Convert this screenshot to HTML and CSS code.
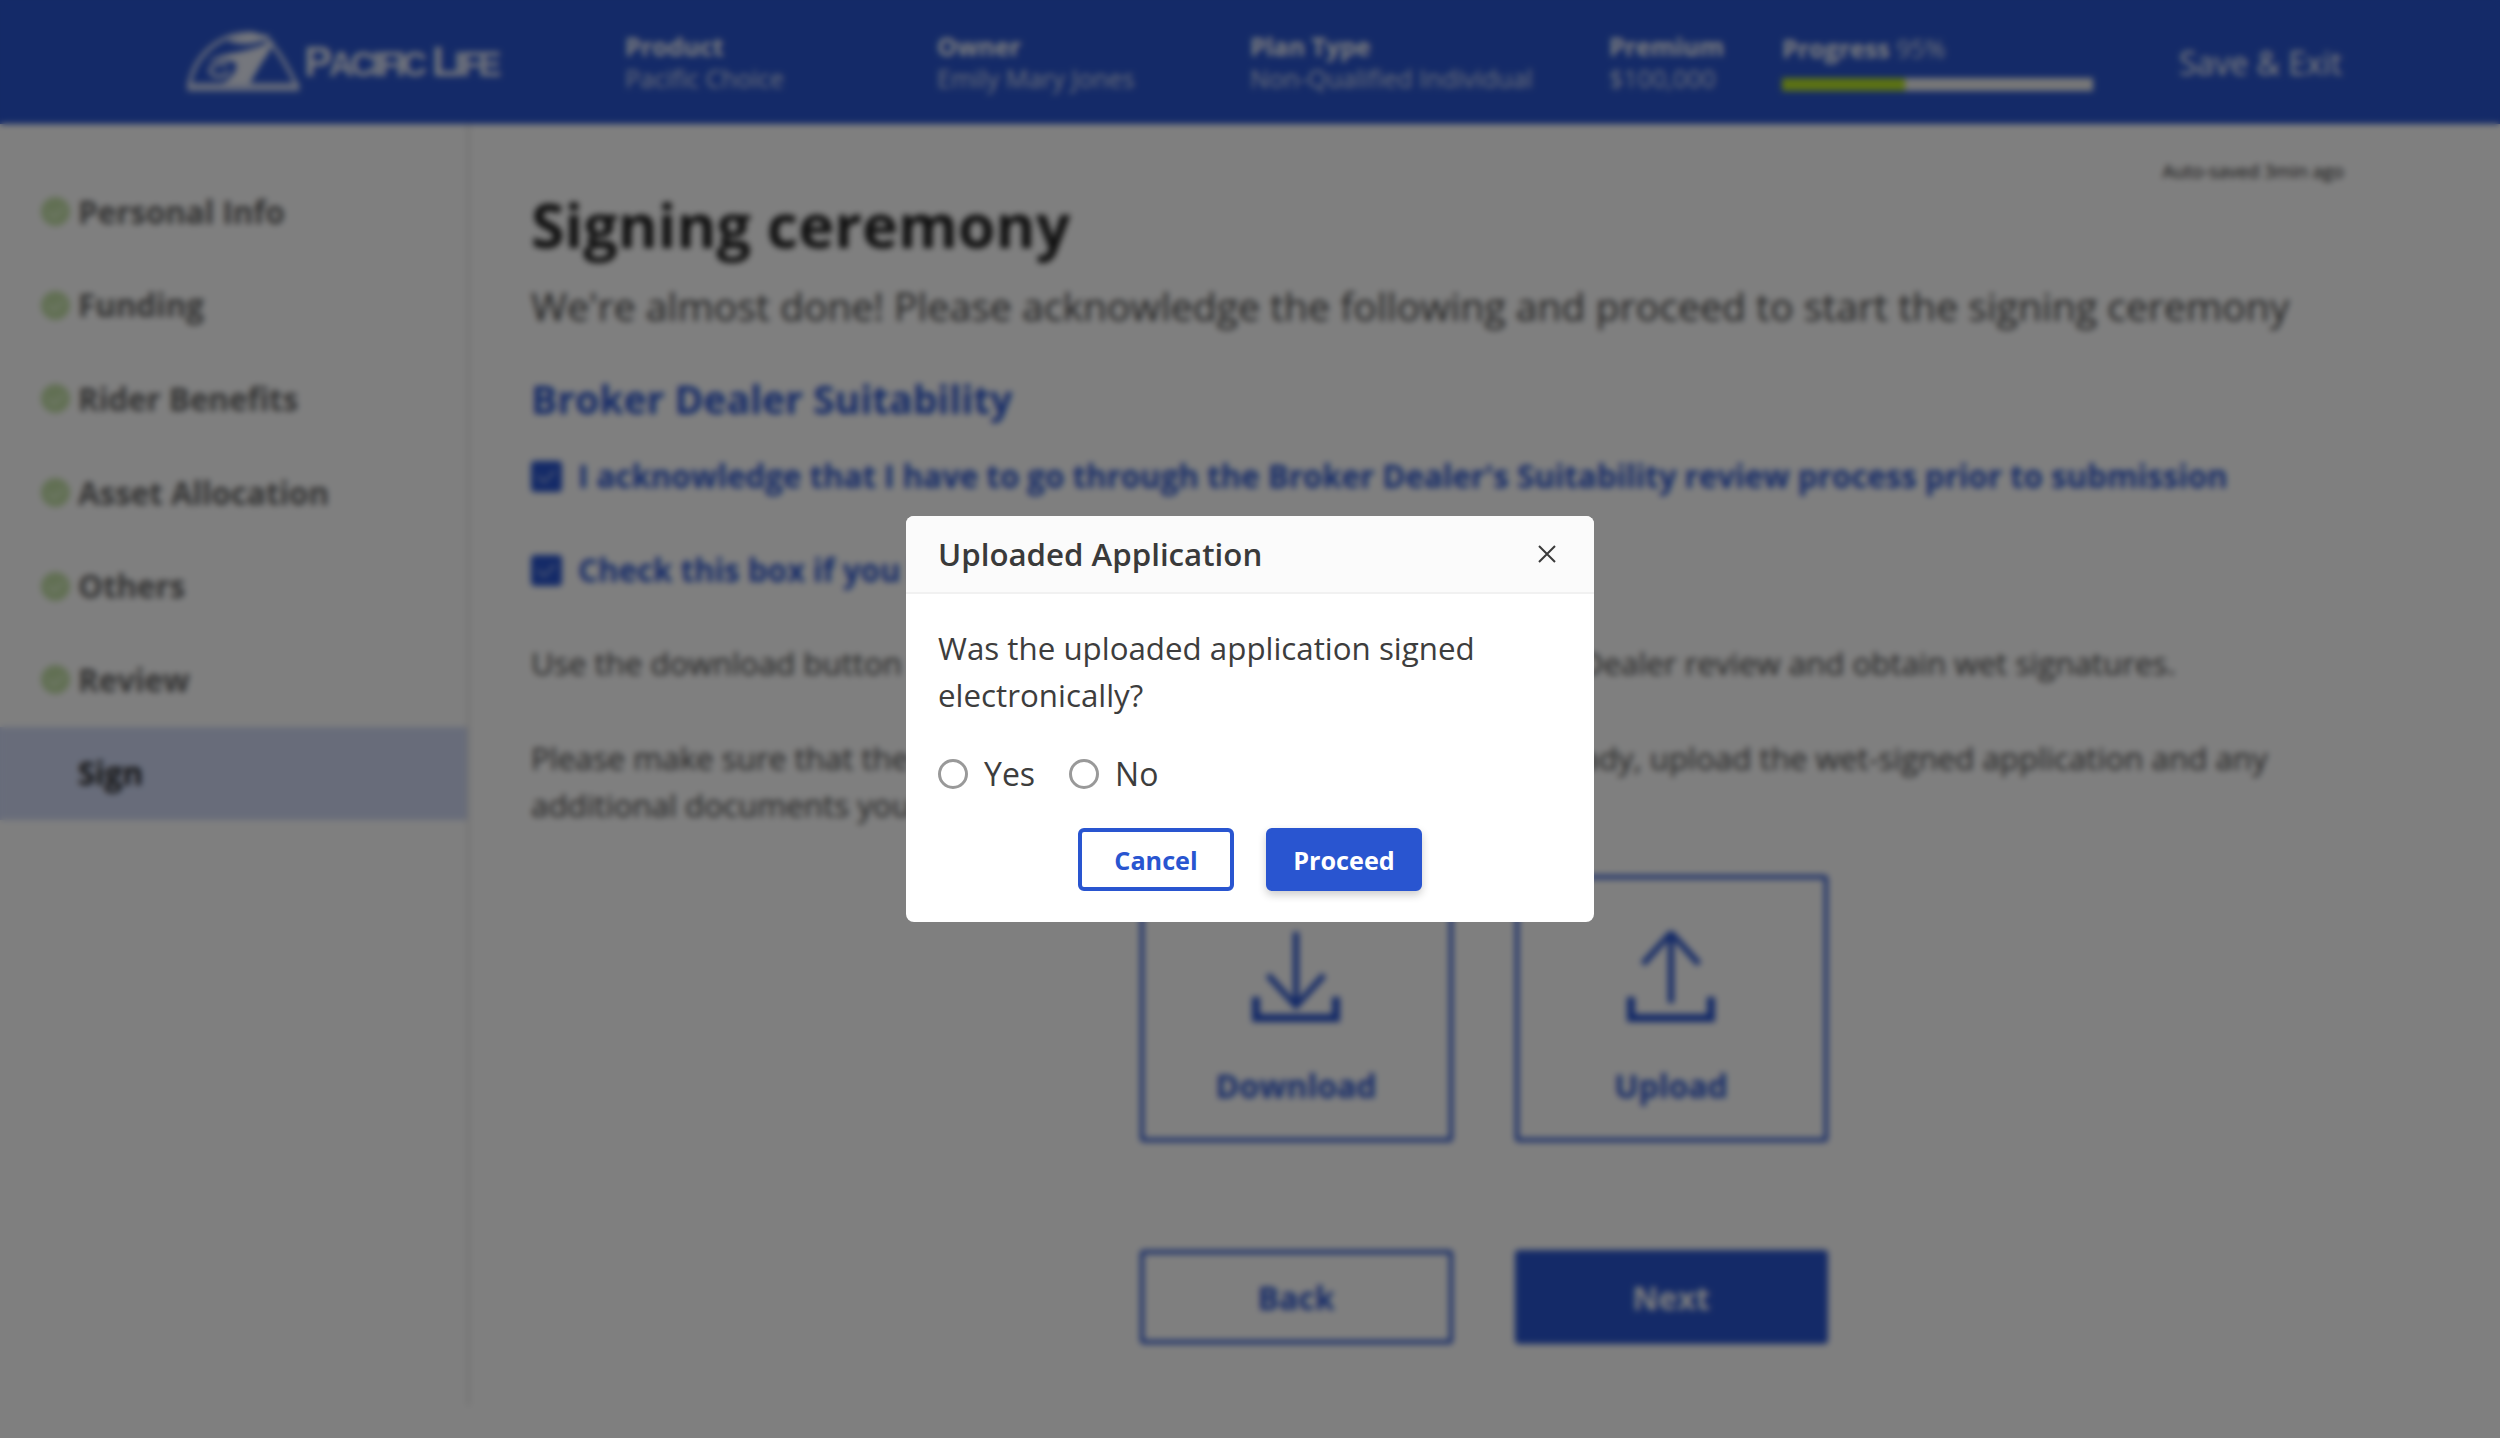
FILE: index.html
```html
<!DOCTYPE html>
<html lang="en">
<head>
    <meta charset="UTF-8">
    <meta name="viewport" content="width=device-width, initial-scale=1.0">
    <title>Signing ceremony</title>
    <link rel="stylesheet" href="styles.css">
</head>
<body>
    <div class="page">
        <header class="topbar">
            <div class="logo">
                <svg class="logo-mark" width="117" height="62" viewBox="40 35 350 185" fill="#fff">
                    <path d="M55 200C70 110 140 45 235 42C290 42 330 100 378 200" fill="none" stroke="#fff" stroke-width="10"/>
                    <path d="M170 65C200 45 270 40 300 50C270 75 210 80 170 65Z"/>
                    <path d="M110 125C160 95 230 105 310 60L290 105C270 130 250 170 235 195L150 195C190 170 200 150 195 130C170 120 140 120 110 125Z"/>
                    <path d="M170 135C130 125 105 150 125 165C140 175 165 170 175 155" fill="none" stroke="#fff" stroke-width="10"/>
                    <rect x="50" y="190" width="335" height="25" opacity=".8"/>
                </svg>
                <span class="logo-text">P<small>ACIFIC</small> L<small>IFE</small></span>
            </div>
            <div class="info"><b>Product</b><span>Pacific Choice</span></div>
            <div class="info"><b>Owner</b><span>Emily Mary Jones</span></div>
            <div class="info"><b>Plan Type</b><span>Non-Qualified Individual</span></div>
            <div class="info"><b>Premium</b><span>$100,000</span></div>
            <div class="info info-progress">
                <div class="progress-label"><b>Progress</b> <span>95%</span></div>
                <div class="bar"><div class="bar-fill" style="width:39.5%"></div></div>
            </div>
            <a class="save-exit">Save &amp; Exit</a>
        </header>

        <div class="content">
            <nav class="sidebar">
                <div class="step"><i class="tick"></i>Personal Info</div>
                <div class="step"><i class="tick"></i>Funding</div>
                <div class="step"><i class="tick"></i>Rider Benefits</div>
                <div class="step"><i class="tick"></i>Asset Allocation</div>
                <div class="step"><i class="tick"></i>Others</div>
                <div class="step"><i class="tick"></i>Review</div>
                <div class="step active">Sign</div>
            </nav>

            <main class="main">
                <div class="autosave">Auto-saved 3min ago</div>
                <h1>Signing ceremony</h1>
                <p class="lead">We're almost done! Please acknowledge the following and proceed to start the signing ceremony</p>
                <h2>Broker Dealer Suitability</h2>
                <div class="check"><i class="box"></i>I acknowledge that I have to go through the Broker Dealer's Suitability review process prior to submission</div>
                <div class="check"><i class="box"></i>Check this box if you have completed the review</div>
                <p class="text">Use the download button to save your application, complete the Broker Dealer review and obtain wet signatures.</p>
                <p class="text">Please make sure that the application is all fully signed. When you are ready, upload the wet-signed application and any additional documents you may have for this application.</p>

                <div class="tiles">
                    <div class="tile">
                        <svg width="96" height="92" viewBox="0 0 96 92" fill="none" stroke="#2955d0" stroke-width="6">
                            <path d="M48 1V72M20 44L48 75L76 44"/>
                            <path d="M8 66V87H88V66" stroke-width="8"/>
                        </svg>
                        <span>Download</span>
                    </div>
                    <div class="tile">
                        <svg width="96" height="92" viewBox="0 0 96 92" fill="none" stroke="#2955d0" stroke-width="6">
                            <path d="M48 72V4M20 33L48 2L76 33"/>
                            <path d="M8 66V87H88V66" stroke-width="8"/>
                        </svg>
                        <span>Upload</span>
                    </div>
                </div>

                <div class="actions">
                    <button type="button" class="btn-back">Back</button>
                    <button type="button" class="btn-next">Next</button>
                </div>
            </main>
        </div>
    </div>

    <div class="overlay">
        <div class="modal">
            <div class="modal-head">
                <span>Uploaded Application</span>
                <svg width="18" height="18" viewBox="0 0 18 18" stroke="#3a3a3a" stroke-width="2" fill="none">
                    <path d="M1 1L17 17M17 1L1 17"/>
                </svg>
            </div>
            <div class="modal-body">
                <p>Was the uploaded application signed electronically?</p>
                <div class="radios">
                    <label><i class="radio"></i>Yes</label>
                    <label><i class="radio"></i>No</label>
                </div>
                <div class="modal-btns">
                    <button type="button" class="cancel">Cancel</button>
                    <button type="button" class="proceed">Proceed</button>
                </div>
            </div>
        </div>
    </div>
</body>
</html>
```

FILE: styles.css
```css
* {
    box-sizing: border-box;
}
html, body {
    margin: 0;
    height: 100%;
    overflow: hidden;
}
body {
    font-family: "Open Sans", "Liberation Sans", sans-serif;
    color: #3a3a3a;
    background-color: #fff;
}

/* page behind the dialog */
.page {
    height: 1438px;
    background-color: #fff;
}

.topbar {
    height: 124px;
    background-color: #2955d0;
    color: #fff;
    display: grid;
    grid-template-columns: 625px 312px 313px 359px 173px 397px 1fr;
    align-items: center;
}
.logo {
    display: flex;
    align-items: center;
    justify-content: flex-end;
    gap: 3px;
    padding-right: 127px;
}
.logo-mark {
    opacity: .9;
}
.logo-text {
    font-family: "Liberation Sans", sans-serif;
    font-weight: 700;
    font-size: 42px;
    letter-spacing: -3.3px;
    white-space: nowrap;
    opacity: .9;
}
.logo-text small {
    font-size: 82%;
}
.info {
    font-size: 25px;
    line-height: 32px;
    white-space: nowrap;
}
.info b {
    display: block;
    font-weight: 700;
}
.info span {
    display: block;
    font-weight: 400;
    opacity: .8;
}
.info-progress b,
.info-progress span {
    display: inline;
}
.progress-label {
    line-height: 28px;
}
.bar {
    width: 311px;
    height: 13px;
    margin-top: 16px;
    background-color: #f0f0f0;
}
.bar-fill {
    height: 100%;
    background-color: #b8e428;
}
.save-exit {
    font-size: 32px;
    white-space: nowrap;
}

.content {
    display: flex;
    height: 1282px;
}
.sidebar {
    width: 470px;
    flex: none;
    padding-top: 41px;
    border-right: 3px solid #e6e6e6;
}
.step {
    height: 93.6px;
    display: flex;
    align-items: center;
    padding-left: 41px;
    gap: 8px;
    font-size: 31.3px;
    font-weight: 700;
    color: #666;
}
.step.active {
    padding-left: 78px;
    background-color: #d0d9f5;
    color: #222;
}
.tick {
    width: 29px;
    height: 29px;
    border-radius: 50%;
    background-color: #c4e0a8;
    display: flex;
    align-items: center;
    justify-content: center;
}
.tick::after {
    content: "";
    width: 12px;
    height: 7px;
    margin-top: -3px;
    border-left: 2px solid #e6f6d8;
    border-bottom: 2px solid #e6f6d8;
    transform: rotate(-45deg);
}

.main {
    flex: 1;
    padding: 0 156px 0 61px;
}
.autosave {
    text-align: right;
    font-size: 18.5px;
    line-height: 24px;
    margin-top: 35px;
    color: #222;
}
.main h1 {
    margin: 2px 0 0;
    font-size: 61px;
    line-height: 80px;
    font-weight: 700;
    color: #222;
}
.lead {
    margin: 14px 0 0;
    font-size: 39.15px;
    line-height: 54px;
    font-weight: 400;
    color: #444;
    white-space: nowrap;
}
.main h2 {
    margin: 39px 0 0;
    font-size: 39.1px;
    line-height: 54px;
    font-weight: 700;
    color: #2955d0;
}
.check {
    display: flex;
    align-items: center;
    gap: 16px;
    margin-top: 27px;
    height: 46px;
    font-size: 31.25px;
    font-weight: 700;
    color: #2955d0;
    white-space: nowrap;
}
.check + .check {
    margin-top: 48px;
}
.box {
    width: 31px;
    height: 31px;
    border-radius: 4px;
    background-color: #2955d0;
    flex: none;
    display: flex;
    align-items: center;
    justify-content: center;
}
.box::after {
    content: "";
    width: 15px;
    height: 8px;
    margin-top: -4px;
    border-left: 2px solid rgba(255, 255, 255, .6);
    border-bottom: 2px solid rgba(255, 255, 255, .6);
    transform: rotate(-45deg);
}
.text {
    margin: 47px 0 0;
    font-size: 31.3px;
    line-height: 47px;
    font-weight: 400;
    color: #444;
}
.text + .text {
    margin-top: 48px;
}

.tiles,
.actions {
    display: flex;
    justify-content: center;
    gap: 62px;
    padding-left: 92px;
}
.tiles {
    margin-top: 46px;
}
.tile {
    width: 313px;
    height: 267px;
    border: 4px solid #2955d0;
    border-radius: 4px;
    display: flex;
    flex-direction: column;
    align-items: center;
    justify-content: flex-end;
    gap: 41px;
    padding-bottom: 31px;
    color: #2955d0;
    font-size: 32px;
    font-weight: 700;
}
.actions {
    margin-top: 108px;
}
.actions button {
    width: 313px;
    height: 94px;
    border: 4px solid #2955d0;
    border-radius: 4px;
    font-family: inherit;
    font-size: 32px;
    font-weight: 700;
}
.btn-back {
    background-color: #fff;
    color: #2955d0;
}
.btn-next {
    background-color: #2955d0;
    color: #fff;
}

/* dialog */
.overlay {
    position: fixed;
    inset: 0;
    background-color: rgba(0, 0, 0, .5);
    backdrop-filter: blur(3px);
    display: flex;
    align-items: center;
    justify-content: center;
}
.modal {
    width: 688px;
    height: 406px;
    background-color: #fff;
    border-radius: 8px;
    overflow: hidden;
}
.modal-head {
    height: 78px;
    display: flex;
    align-items: center;
    justify-content: space-between;
    padding: 0 38px 0 32px;
    background-color: #fbfbfb;
    border-bottom: 2px solid #f1f1f1;
    font-size: 31.25px;
    font-weight: 600;
    color: #3a3a3a;
}
.modal-body {
    padding: 31px 32px 0;
}
.modal-body p {
    margin: 0;
    font-size: 31.3px;
    line-height: 47px;
    font-weight: 400;
    color: #3d3d3d;
}
.radios {
    display: flex;
    gap: 34px;
    margin-top: 33px;
    font-size: 32px;
    line-height: 44px;
    color: #3d3d3d;
}
.radios label {
    display: flex;
    align-items: center;
    gap: 16px;
}
.radio {
    width: 30px;
    height: 30px;
    border: 3px solid #999;
    border-radius: 50%;
    background-color: #fff;
}
.modal-btns {
    display: flex;
    justify-content: center;
    gap: 32px;
    margin-top: 32px;
}
.modal-btns button {
    width: 156px;
    height: 63px;
    border: 4px solid #2955d0;
    border-radius: 6px;
    font-family: inherit;
    font-size: 25.2px;
    font-weight: 700;
}
.cancel {
    background-color: #fff;
    color: #2955d0;
}
.proceed {
    background-color: #2955d0;
    color: #fff;
    box-shadow: 0 4px 8px rgba(0, 0, 0, .2);
}
```
